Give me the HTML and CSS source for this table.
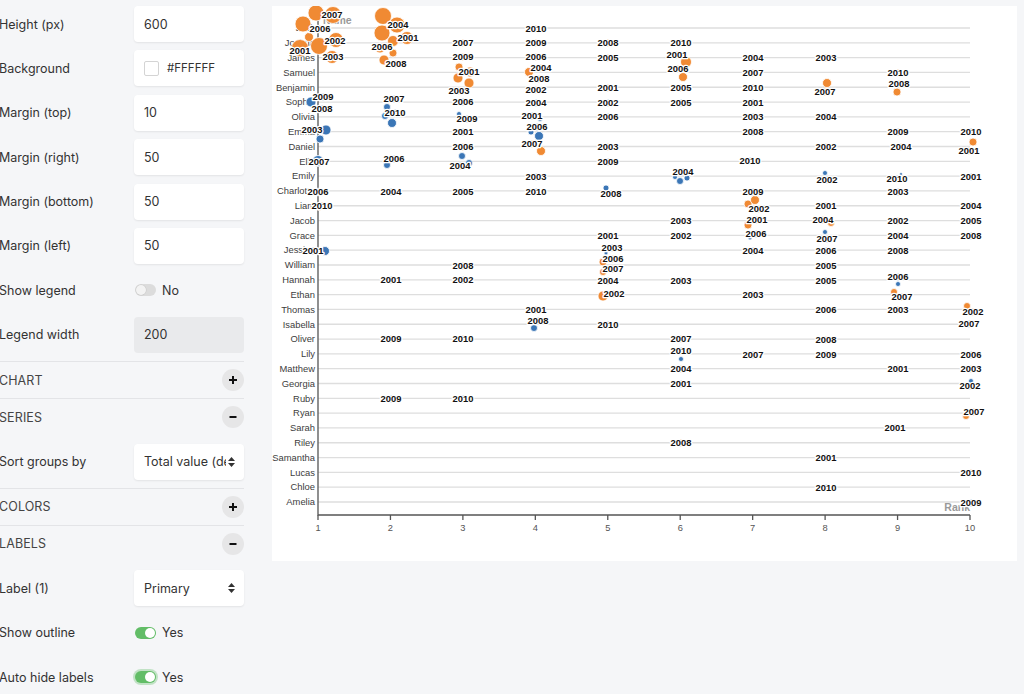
FILE: index.html
```html
<!DOCTYPE html>
<html lang="en">
<head>
<meta charset="utf-8">
<title>Chart editor</title>
<link rel="stylesheet" href="styles.css">
</head>
<body>
<div class="page">
  <aside class="sidebar">
    <div class="section-body first">
      <div class="row"><span class="label">Height (px)</span><div class="field">600</div></div>
      <div class="row"><span class="label">Background</span><div class="field"><span class="swatch"></span><span class="hex">#FFFFFF</span></div></div>
      <div class="row"><span class="label">Margin (top)</span><div class="field">10</div></div>
      <div class="row"><span class="label">Margin (right)</span><div class="field">50</div></div>
      <div class="row"><span class="label">Margin (bottom)</span><div class="field">50</div></div>
      <div class="row"><span class="label">Margin (left)</span><div class="field">50</div></div>
      <div class="row"><span class="label">Show legend</span><div class="toggle-wrap"><span class="toggle off"><span class="knob"></span></span><span class="toggle-text">No</span></div></div>
      <div class="row"><span class="label">Legend width</span><div class="field disabled">200</div></div>
    </div>
    <div class="section-head"><span class="head-title">CHART</span><span class="circle-btn"><svg width="10" height="10" viewBox="0 0 10 10"><path d="M5 1v8M1 5h8" stroke="#111" stroke-width="2"/></svg></span></div>
    <div class="section-head"><span class="head-title">SERIES</span><span class="circle-btn"><svg width="10" height="10" viewBox="0 0 10 10"><path d="M1.5 5h7" stroke="#111" stroke-width="2"/></svg></span></div>
    <div class="section-body">
      <div class="row"><span class="label">Sort groups by</span><div class="field select"><span class="select-text">Total value (desc)</span><svg class="arrows" width="7" height="10" viewBox="0 0 7 10"><path d="M3.5 0L7 4H0Z M0 6H7L3.5 10Z" fill="#333"/></svg></div></div>
    </div>
    <div class="section-head"><span class="head-title">COLORS</span><span class="circle-btn"><svg width="10" height="10" viewBox="0 0 10 10"><path d="M5 1v8M1 5h8" stroke="#111" stroke-width="2"/></svg></span></div>
    <div class="section-head"><span class="head-title">LABELS</span><span class="circle-btn"><svg width="10" height="10" viewBox="0 0 10 10"><path d="M1.5 5h7" stroke="#111" stroke-width="2"/></svg></span></div>
    <div class="section-body">
      <div class="row"><span class="label">Label (1)</span><div class="field select"><span class="select-text">Primary</span><svg class="arrows" width="7" height="10" viewBox="0 0 7 10"><path d="M3.5 0L7 4H0Z M0 6H7L3.5 10Z" fill="#333"/></svg></div></div>
      <div class="row"><span class="label">Show outline</span><div class="toggle-wrap"><span class="toggle on"><span class="knob"></span></span><span class="toggle-text">Yes</span></div></div>
      <div class="row"><span class="label">Auto hide labels</span><div class="toggle-wrap"><span class="toggle on focus"><span class="knob"></span></span><span class="toggle-text">Yes</span></div></div>
    </div>
  </aside>
  <main class="chart-card">
    <svg id="chart" class="chart" width="745" height="555" viewBox="272 6 745 555"></svg>
  </main>
</div>
<script src="chart.js"></script>
</body>
</html>
```

FILE: styles.css
```css
* { box-sizing: border-box; }
html, body { margin: 0; padding: 0; }
body {
  background: #f5f6f8;
  font-family: Inter, "Noto Sans", "Liberation Sans", sans-serif;
  color: #333;
  width: 1024px;
  height: 694px;
  overflow: hidden;
}
.page {
  display: flex;
  align-items: flex-start;
}
.sidebar {
  flex: none;
  width: 244px;
  margin-top: -2.4px;
}
.section-body { padding-top: 8.4px; }
.row {
  display: grid;
  grid-template-columns: 134px 110px;
  align-items: center;
  height: 36px;
  margin-bottom: 8.4px;
}
.label {
  font-size: 12.5px;
  color: #333;
  margin-left: -1px;
  white-space: nowrap;
}
.field {
  height: 36px;
  background: #fff;
  border-radius: 4px;
  box-shadow: 0 1px 2px rgba(0, 0, 0, 0.08);
  display: flex;
  align-items: center;
  padding: 0 10px;
  font-size: 12.5px;
  color: #333;
  overflow: hidden;
}
.field.disabled {
  background: #e9eaec;
  box-shadow: none;
}
.swatch {
  width: 15px;
  height: 15px;
  border: 1px solid #d4d4d4;
  border-radius: 2px;
  background: #fff;
  margin-right: 8px;
  flex: none;
}
.hex { font-size: 11.5px; }
.select { justify-content: space-between; padding-right: 9px; }
.select-text {
  white-space: nowrap;
  overflow: hidden;
  flex: 1;
  min-width: 0;
}
.arrows { flex: none; margin-left: 2px; }
.toggle-wrap {
  display: flex;
  align-items: center;
  gap: 6px;
  font-size: 12.5px;
}
.toggle {
  width: 21px;
  height: 12px;
  border-radius: 6px;
  position: relative;
  display: inline-block;
  margin-left: 1px;
}
.toggle.off { background: #dcdcdc; }
.toggle.on { background: #62bd67; }
.toggle.focus { box-shadow: 0 0 0 2px rgba(98, 189, 103, 0.35); }
.knob {
  position: absolute;
  top: 1px;
  width: 10px;
  height: 10px;
  border-radius: 50%;
  background: #fff;
}
.toggle.off .knob { left: 1px; background: #f3f3f3; box-shadow: 0 0 0 0.5px #c8c8c8; }
.toggle.on .knob { right: 1px; }
.toggle-text { color: #333; }
.section-head {
  border-top: 1px solid #e3e4e7;
  height: 37px;
  display: flex;
  align-items: center;
  justify-content: space-between;
}
.head-title {
  font-size: 12.5px;
  color: #444;
  margin-left: -1px;
  letter-spacing: 0.1px;
}
.circle-btn {
  width: 22px;
  height: 22px;
  border-radius: 50%;
  background: #e6e6e7;
  display: flex;
  align-items: center;
  justify-content: center;
}
.chart-card {
  flex: none;
  margin-left: 28px;
  margin-top: 6px;
  width: 745px;
  height: 555px;
  background: #fff;
}
.chart { display: block; }
.grid { stroke: #dedede; stroke-width: 1.3; }
.axis { stroke: #555; stroke-width: 1.3; fill: none; }
.name {
  font-family: "Liberation Sans", Arial, sans-serif;
  font-size: 9.4px;
  fill: #3d3d3d;
}
.tick {
  font-family: "Liberation Sans", Arial, sans-serif;
  font-size: 9.3px;
  fill: #555;
}
.title {
  font-family: "Liberation Sans", Arial, sans-serif;
  font-size: 10.5px;
  font-weight: bold;
  fill: #9a9a9a;
}
.yr {
  font-family: "Liberation Sans", Arial, sans-serif;
  font-size: 9.4px;
  font-weight: bold;
  fill: #111;
  stroke: #fff;
  stroke-width: 2.6px;
  paint-order: stroke;
  stroke-linejoin: round;
}
.dot { stroke: #fff; stroke-width: 0.8; }
.o { fill: #f08a33; }
.b { fill: #3b76b6; }
```

FILE: chart.js
```js
(function () {
  var svg = document.getElementById('chart');
  var NS = 'http://www.w3.org/2000/svg';
  function el(tag, attrs, text) {
    var e = document.createElementNS(NS, tag);
    for (var k in attrs) e.setAttribute(k, attrs[k]);
    if (text !== undefined) e.textContent = text;
    svg.appendChild(e);
    return e;
  }
  var names = ['Jack','Joshua','James','Samuel','Benjamin','Sophie','Olivia','Emma','Daniel','Ella','Emily','Charlotte','Liam','Jacob','Grace','Jessica','William','Hannah','Ethan','Thomas','Isabella','Oliver','Lily','Matthew','Georgia','Ruby','Ryan','Sarah','Riley','Samantha','Lucas','Chloe','Amelia'];
  var sex = ['o','o','o','o','o','b','b','b','o','b','b','b','o','o','b','b','o','b','o','o','b','o','b','o','b','b','o','b','o','b','o','b','b'];
  var x0 = 318, x1 = 970, yTop = 28, step = 14.8125, axisY = 515;
  var cols = [];
  for (var c = 0; c < 10; c++) cols.push(x0 + c * (x1 - x0) / 9);

  names.forEach(function (n, i) {
    var y = yTop + i * step;
    el('line', { x1: x0, x2: x1, y1: y, y2: y, 'class': 'grid' });
  });
  el('path', { d: 'M' + x0 + ' 12V' + axisY + 'H' + x1, 'class': 'axis' });
  cols.forEach(function (x, i) {
    el('line', { x1: x, x2: x, y1: axisY, y2: axisY + 5, 'class': 'axis' });
    el('text', { x: x, y: axisY + 16, 'text-anchor': 'middle', 'class': 'tick' }, String(i + 1));
  });
  names.forEach(function (n, i) {
    var y = yTop + i * step;
    el('text', { x: 315, y: y + 3.3, 'text-anchor': 'end', 'class': 'name' }, n);
  });
  el('text', { x: 323, y: 23.5, 'class': 'title' }, 'Name');
  el('text', { x: 970, y: 511, 'text-anchor': 'end', 'class': 'title' }, 'Rank');

  var labels = [
    [0, [[332,15,'2007'],[320,29,'2006'],[398,25,'2004'],[536,29,'2010']]],
    [1, [[335,41,'2002'],[300,51,'2001'],[382,47,'2006'],[408,38,'2001'],[463,43,'2007'],[536,43,'2009'],[608,43,'2008'],[681,43,'2010']]],
    [2, [[333,57,'2003'],[396,64,'2008'],[463,57,'2009'],[536,57,'2006'],[608,58,'2005'],[677,55,'2001'],[753,58,'2004'],[826,58,'2003']]],
    [3, [[469,72,'2001'],[541,68,'2004'],[539,79,'2008'],[678,69,'2006'],[753,73,'2007'],[898,73,'2010']]],
    [4, [[459,91,'2003'],[536,90,'2002'],[608,88,'2001'],[681,88,'2005'],[753,88,'2010'],[825,92,'2007'],[899,84,'2008']]],
    [5, [[323,97,'2009'],[394,99,'2007'],[463,102,'2006'],[536,103,'2004'],[608,103,'2002'],[681,103,'2005'],[753,103,'2001']]],
    [6, [[322,109,'2008'],[395,113,'2010'],[467,119,'2009'],[532,116,'2001'],[608,117,'2006'],[753,117,'2003'],[826,117,'2004']]],
    [7, [[312,130,'2003'],[463,132,'2001'],[537,127,'2006'],[753,132,'2008'],[898,132,'2009'],[971,132,'2010']]],
    [8, [[463,147,'2006'],[532,144,'2007'],[608,147,'2003'],[826,147,'2002'],[901,147,'2004'],[969,151,'2001']]],
    [9, [[319,162,'2007'],[394,159,'2006'],[460,166,'2004'],[608,162,'2009'],[750,161,'2010']]],
    [10, [[536,177,'2003'],[683,172,'2004'],[827,180,'2002'],[897,179,'2010'],[971,177,'2001']]],
    [11, [[318,192,'2006'],[391,192,'2004'],[463,192,'2005'],[536,192,'2010'],[611,194,'2008'],[753,192,'2009'],[898,192,'2003']]],
    [12, [[322,206,'2010'],[759,209,'2002'],[826,206,'2001'],[971,206,'2004']]],
    [13, [[681,221,'2003'],[757,220,'2001'],[823,220,'2004'],[898,221,'2002'],[971,221,'2005']]],
    [14, [[608,236,'2001'],[681,236,'2002'],[756,234,'2006'],[827,239,'2007'],[898,236,'2004'],[971,236,'2008']]],
    [15, [[313,251,'2001'],[612,248,'2003'],[753,251,'2004'],[826,251,'2006'],[898,251,'2008']]],
    [16, [[463,266,'2008'],[613,259,'2006'],[613,269,'2007'],[826,266,'2005']]],
    [17, [[391,280,'2001'],[463,280,'2002'],[608,281,'2004'],[681,281,'2003'],[826,281,'2005'],[898,277,'2006']]],
    [18, [[614,294,'2002'],[753,295,'2003'],[902,297,'2007']]],
    [19, [[536,310,'2001'],[826,310,'2006'],[898,310,'2003'],[973,312,'2002']]],
    [20, [[538,321,'2008'],[608,325,'2010'],[969,324,'2007']]],
    [21, [[391,339,'2009'],[463,339,'2010'],[681,339,'2007'],[826,340,'2008']]],
    [22, [[681,351,'2010'],[753,355,'2007'],[826,355,'2009'],[971,355,'2006']]],
    [23, [[681,369,'2004'],[898,369,'2001'],[971,369,'2003']]],
    [24, [[681,384,'2001'],[970,386,'2002']]],
    [25, [[391,399,'2009'],[463,399,'2010']]],
    [26, [[974,412,'2007']]],
    [27, [[895,428,'2001']]],
    [28, [[681,443,'2008']]],
    [29, [[826,458,'2001']]],
    [30, [[971,473,'2010']]],
    [31, [[826,488,'2010']]],
    [32, [[971,503,'2009']]]
  ];

  labels.forEach(function (row) {
    var cl = sex[row[0]];
    row[1].forEach(function (l) {
      el('circle', { cx: l[0], cy: l[1], r: 3.9, 'class': 'dot ' + cl });
    });
  });

  var dots = [
    [316,13,8,'o'],[333,15,8.5,'o'],[303,24,8,'o'],[309,37,4.5,'o'],[336,40,7.5,'o'],[300,48,8.5,'o'],[319,46,8.5,'o'],[332,57,6.5,'o'],[319,208,2.5,'o'],
    [383,16,8.5,'o'],[397,25,8,'o'],[382,33,8,'o'],[407,38,6.5,'o'],[393,41,5.5,'o'],[380,48,5,'o'],[393,53,4,'o'],[384,60,5,'o'],
    [459,67,4,'o'],[470,72,5,'o'],[458,78,5,'o'],[469,83,5,'o'],
    [529,72,4.5,'o'],[541,151,4.5,'o'],
    [603,262,4,'o'],[603,272,3.5,'o'],[603,296,5,'o'],
    [686,62,5.5,'o'],[683,77,4.5,'o'],
    [748,204,4,'o'],[755,200,4.5,'o'],[748,225,4,'o'],
    [827,83,4.5,'o'],[831,223,3.5,'o'],
    [897,92,4,'o'],[894,292,3.5,'o'],
    [973,142,4,'o'],[967,306,3.5,'o'],[966,416,3.5,'o'],
    [311,102,5,'b'],[326,130,5,'b'],[320,139,4,'b'],[318,161,5.5,'b'],[325,251,4.5,'b'],
    [387,107,3.5,'b'],[385,116,3.5,'b'],[392,123,4.5,'b'],[387,165,3.5,'b'],
    [459,114,2.5,'b'],[462,156,3.5,'b'],[469,163,3.5,'b'],
    [540,119,2.5,'b'],[531,132,3,'b'],[539,136,4.5,'b'],[534,328,3.5,'b'],
    [606,188,3,'b'],[606,253,2,'b'],
    [675,177,2.5,'b'],[680,181,3.5,'b'],[687,178,3,'b'],[681,359,2.5,'b'],
    [750,238,2,'b'],
    [825,173,2.5,'b'],[825,232,2.5,'b'],
    [898,284,2.5,'b'],[901,174,1.5,'b'],
    [971,381,2.5,'b']
  ];
  dots.forEach(function (d) {
    el('circle', { cx: d[0], cy: d[1], r: d[2], 'class': 'dot ' + d[3] });
  });

  labels.forEach(function (row) {
    row[1].forEach(function (l) {
      el('text', { x: l[0], y: l[1] + 3.3, 'text-anchor': 'middle', 'class': 'yr' }, l[2]);
    });
  });
})();
```
